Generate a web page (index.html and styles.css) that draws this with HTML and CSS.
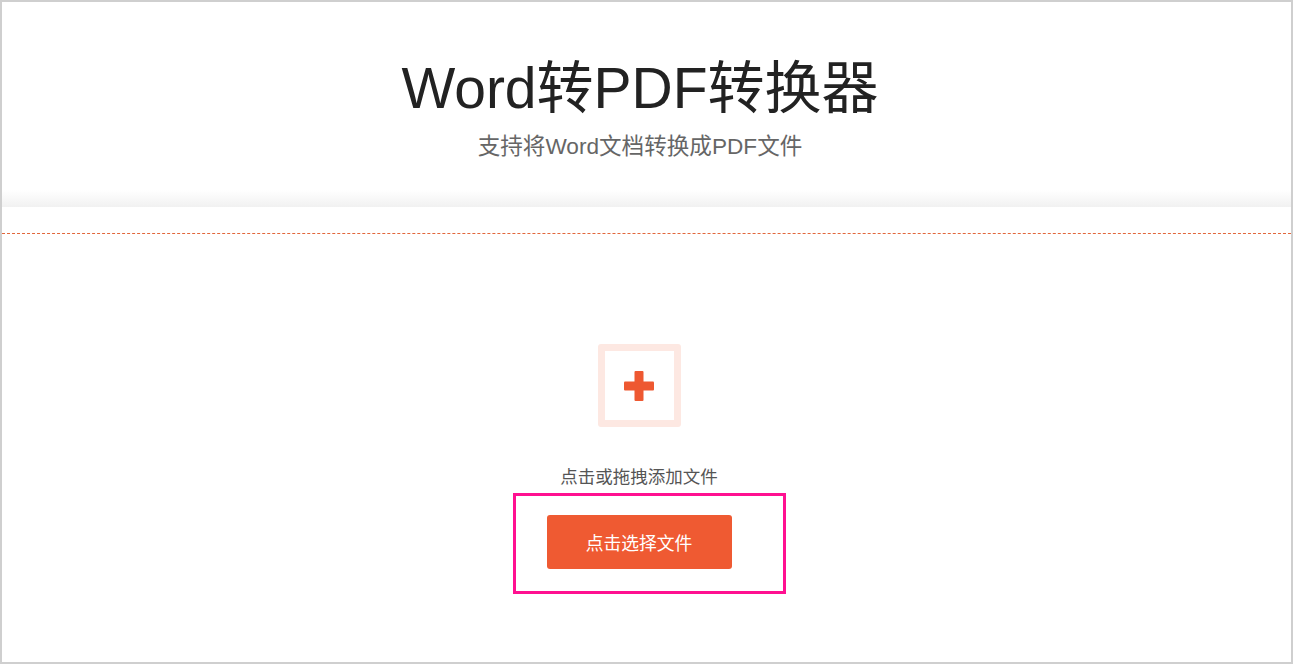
FILE: index.html
```html
<!DOCTYPE html>
<html lang="zh-CN">
<head>
    <meta charset="UTF-8">
    <meta name="viewport" content="width=device-width, initial-scale=1.0">
    <title>Word转PDF转换器</title>
    <link rel="stylesheet" href="styles.css">
</head>
<body>
    <div class="page">
        <!-- 顶部标题 -->
        <div class="header">
            <h1 class="title">Word转PDF转换器</h1>
            <p class="subtitle">支持将Word文档转换成PDF文件</p>
        </div>

        <div class="spacer"></div>

        <!-- 上传区域 -->
        <div class="upload">
            <div class="add-box">
                <svg width="32" height="32" viewBox="0 0 32 32">
                    <rect x="11.5" y="1" width="9" height="30" rx="1" fill="#ee5831"/>
                    <rect x="1" y="11.5" width="30" height="9" rx="1" fill="#ee5831"/>
                </svg>
            </div>
            <p class="hint">点击或拖拽添加文件</p>
            <div class="btn-wrap">
                <button class="select-button">点击选择文件</button>
                <span class="mark"></span>
            </div>
        </div>
    </div>
</body>
</html>
```

FILE: styles.css
```css
html, body {
    margin: 0;
    padding: 0;
    background: #fff;
}

body {
    font-family: "Liberation Sans", "Noto Sans CJK SC", sans-serif;
}

.page {
    box-sizing: border-box;
    width: 1293px;
    height: 664px;
    border: 2px solid #cfcfcf;
    display: flex;
    flex-direction: column;
}

.header {
    height: 205px;
    box-sizing: border-box;
    padding: 54px 13px 0 0;
    display: flex;
    flex-direction: column;
    align-items: center;
    background: linear-gradient(to bottom, #fff 0, #fff 188px, #f1f1f1 205px);
}

.title {
    margin: 0;
    font-size: 57px;
    line-height: 64px;
    font-weight: 400;
    color: #222;
}

.subtitle {
    margin: 12px 0 0;
    font-size: 22.6px;
    line-height: 30px;
    color: #666;
}

.spacer {
    height: 26px;
}

.upload {
    flex: 1;
    border-top: 1px dashed #e2673c;
    padding: 110px 15px 0 0;
    display: flex;
    flex-direction: column;
    align-items: center;
}

.add-box {
    width: 83px;
    height: 83px;
    box-sizing: border-box;
    border: 7px solid #fde8e2;
    border-radius: 3px;
    display: flex;
    justify-content: center;
    align-items: center;
}

.hint {
    margin: 38px 0 0;
    font-size: 17.5px;
    line-height: 24px;
    color: #555;
}

.btn-wrap {
    position: relative;
    margin-top: 26px;
}

.select-button {
    display: block;
    width: 185px;
    height: 54px;
    border: none;
    border-radius: 3px;
    background: #ef5a32;
    color: #fff;
    font-family: "Liberation Sans", "Noto Sans CJK SC", sans-serif;
    font-size: 17.8px;
    cursor: pointer;
}

/* 标注框 */
.mark {
    position: absolute;
    left: -34px;
    top: -22px;
    width: 273px;
    height: 101px;
    box-sizing: border-box;
    border: 3px solid #ff1090;
}
```
